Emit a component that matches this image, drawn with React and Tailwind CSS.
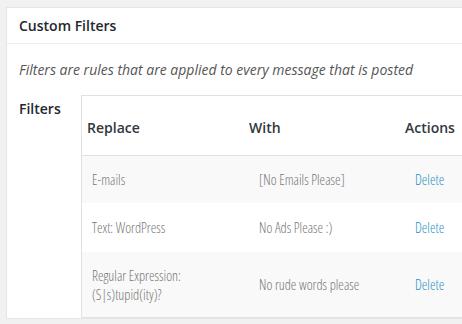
const rows = [
  { replace: ["E-mails"], with: "[No Emails Please]", bg: "bg-[#f9f9f9]", h: "h-[47px]" },
  { replace: ["Text: WordPress"], with: "No Ads Please :)", bg: "bg-white", h: "h-[49px]" },
  {
    replace: ["Regular Expression:", "(S|s)tupid(ity)?"],
    with: "No rude words please",
    bg: "bg-[#f9f9f9]",
    h: "h-[65px]",
  },
];

export default function App() {
  return (
    <div className="h-[324px] w-[462px] overflow-hidden bg-[#f1f1f1] pl-[6px] pt-[7px] font-['Open_Sans',sans-serif]">
      <div className="w-[520px] border border-[#e5e5e5] bg-white">
        <div className="flex h-[36px] items-center border-b border-[#eeeeee] px-3 text-[14px] font-semibold text-[#23282d]">
          Custom Filters
        </div>
        <div className="px-3 pt-[16px]">
          <p className="text-[14px] italic leading-5 text-[#555]">
            Filters are rules that are applied to every message that is posted
          </p>
          <div className="mt-[15px] flex">
            <div className="w-[62px] shrink-0 pt-[3px] text-[14px] font-semibold text-[#23282d]">Filters</div>
            <div className="w-[430px] border border-[#e1e1e1]">
              <div className="grid h-[60px] grid-cols-[162px_156px_1fr] items-center border-b border-[#e1e1e1] text-[14px] font-semibold text-[#32373c]">
                <div className="pl-[5px] pt-[3px]">Replace</div>
                <div className="pl-[5px] pt-[3px]">With</div>
                <div className="pl-[5px] pt-[3px]">Actions</div>
              </div>
              {rows.map((r, i) => (
                <div
                  key={i}
                  className={`grid grid-cols-[162px_156px_1fr] items-center text-[14px] font-light leading-[19px] text-[#777] [font-stretch:75%] ${r.bg} ${r.h}`}
                >
                  <div className="pl-[10px]">
                    {r.replace.map((t) => (
                      <div key={t}>{t}</div>
                    ))}
                  </div>
                  <div className="pl-[15px]">{r.with}</div>
                  <div className="pl-[15px] text-[#2e8fc2]">Delete</div>
                </div>
              ))}
            </div>
          </div>
        </div>
      </div>
    </div>
  );
}
